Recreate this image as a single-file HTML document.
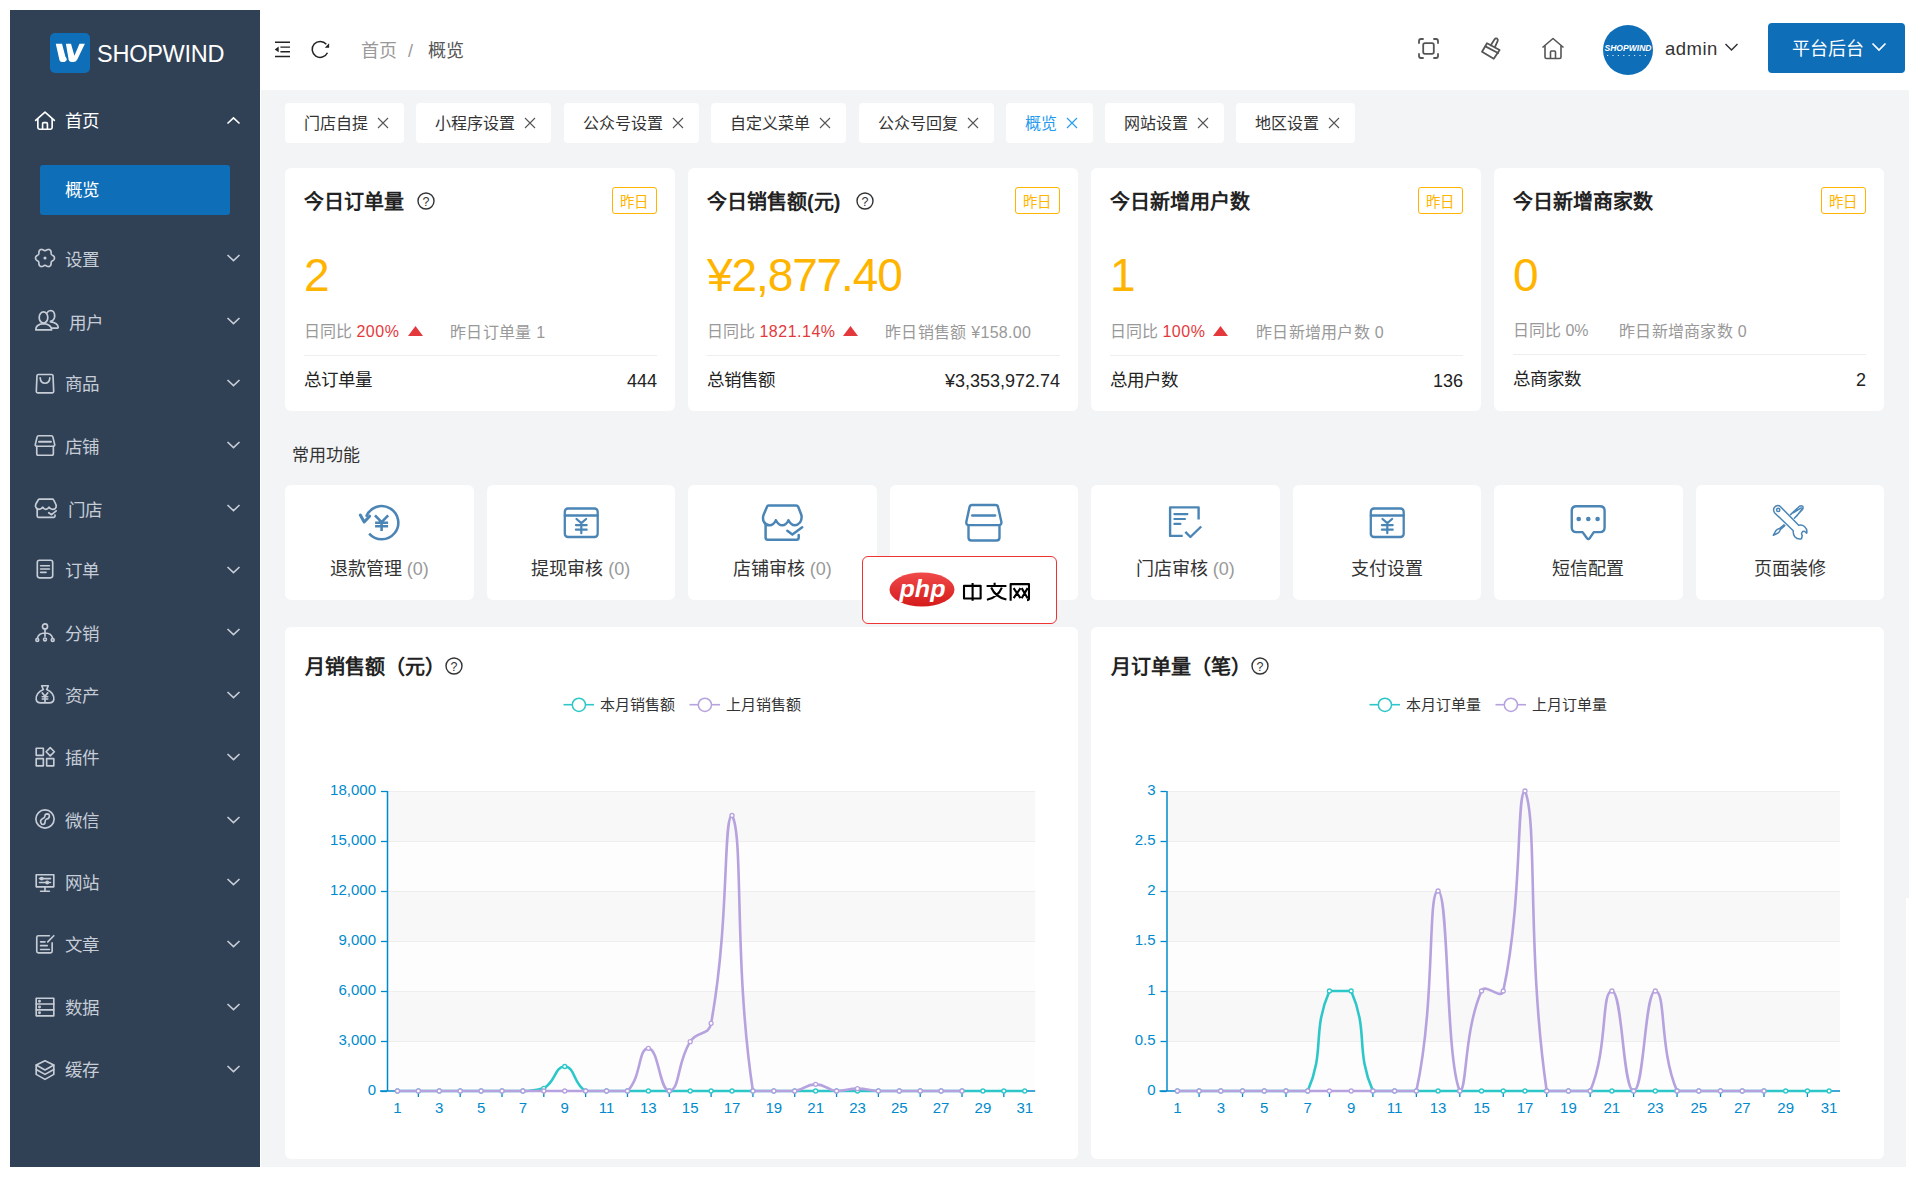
<!DOCTYPE html>
<html lang="zh-CN"><head><meta charset="utf-8"><title>ShopWind</title>
<style>
html,body{margin:0;padding:0;}
body{width:1920px;height:1180px;position:relative;overflow:hidden;background:#fff;font-family:"Liberation Sans", sans-serif;}
</style></head><body>
<div style="position:absolute;left:10px;top:10px;width:250px;height:1157px;background:#304156"></div><div style="position:absolute;left:50px;top:33px;width:40px;height:40px;border-radius:5px;background:#0e6eb8"></div><svg style="position:absolute;left:50px;top:33px" width="40" height="40" viewBox="0 0 40 40" ><path d="M5.76,10.85 L12.03,10.85 L15.3,23.2 L16.9,26.2 Q16.2,29 13,29 L12,29 Q10,29 9.5,27.3 Z" fill="#fff"/><path d="M15.9,10.85 L21,10.85 L24.4,22.7 L29.5,10.85 L34.9,10.85 L27.3,26.5 Q26,29 23.2,29 L21.6,29 Q19.3,29 18.7,27 Z" fill="#fff"/></svg><div style="position:absolute;left:97px;top:42.55px;height:23.5px;line-height:23.5px;font-size:23.5px;color:#fff;font-weight:normal;white-space:nowrap;letter-spacing:-0.25px">SHOPWIND</div><svg style="position:absolute;left:34px;top:109.5px" width="22" height="22" viewBox="0 0 20 20" ><g fill="none" stroke="#ffffff" stroke-width="1.5" stroke-linecap="round" stroke-linejoin="round"><path d="M1.5,9.5 L10,2 L18.5,9.5"/><path d="M3.5,8 V16 Q3.5,17.5 5,17.5 H15 Q16.5,17.5 16.5,16 V8"/><path d="M7.8,17.5 V12.5 Q7.8,11.5 8.8,11.5 H11.2 Q12.2,11.5 12.2,12.5 V17.5"/></g></svg><div style="position:absolute;left:65px;top:113.25px;height:17.5px;line-height:17.5px;font-size:17.5px;color:#ffffff;font-weight:normal;white-space:nowrap;">首页</div><svg style="position:absolute;left:226px;top:115.8px" width="15" height="10" viewBox="0 0 15 10" ><path d="M1.5,7.5 L7.5,1.8 L13.5,7.5" fill="none" stroke="#ffffff" stroke-width="1.6"/></svg><svg style="position:absolute;left:34px;top:246.6px" width="22" height="22" viewBox="0 0 20 20" ><g fill="none" stroke="#c7cdd6" stroke-width="1.5" stroke-linecap="round" stroke-linejoin="round"><path d="M18.60,10.00 L18.57,10.45 L18.45,10.89 L18.23,11.30 L17.92,11.68 L17.54,12.02 L17.12,12.31 L16.70,12.57 L16.33,12.82 L16.02,13.07 L15.80,13.35 L15.67,13.68 L15.60,14.07 L15.58,14.52 L15.56,15.01 L15.52,15.52 L15.42,16.02 L15.25,16.48 L15.00,16.88 L14.67,17.20 L14.30,17.45 L13.90,17.65 L13.46,17.76 L12.99,17.78 L12.50,17.70 L12.02,17.54 L11.56,17.32 L11.12,17.09 L10.72,16.89 L10.35,16.75 L10.00,16.70 L9.65,16.75 L9.28,16.89 L8.88,17.09 L8.44,17.32 L7.98,17.54 L7.50,17.70 L7.01,17.78 L6.54,17.76 L6.10,17.65 L5.70,17.45 L5.33,17.20 L5.00,16.88 L4.75,16.48 L4.58,16.02 L4.48,15.52 L4.44,15.01 L4.42,14.52 L4.40,14.07 L4.33,13.68 L4.20,13.35 L3.98,13.07 L3.67,12.82 L3.30,12.57 L2.88,12.31 L2.46,12.02 L2.08,11.68 L1.77,11.30 L1.55,10.89 L1.43,10.45 L1.40,10.00 L1.43,9.55 L1.55,9.11 L1.77,8.70 L2.08,8.32 L2.46,7.98 L2.88,7.69 L3.30,7.43 L3.67,7.18 L3.98,6.93 L4.20,6.65 L4.33,6.32 L4.40,5.93 L4.42,5.48 L4.44,4.99 L4.48,4.48 L4.58,3.98 L4.75,3.52 L5.00,3.12 L5.33,2.80 L5.70,2.55 L6.10,2.35 L6.54,2.24 L7.01,2.22 L7.50,2.30 L7.98,2.46 L8.44,2.68 L8.88,2.91 L9.28,3.11 L9.65,3.25 L10.00,3.30 L10.35,3.25 L10.72,3.11 L11.12,2.91 L11.56,2.68 L12.02,2.46 L12.50,2.30 L12.99,2.22 L13.46,2.24 L13.90,2.35 L14.30,2.55 L14.67,2.80 L15.00,3.12 L15.25,3.52 L15.42,3.98 L15.52,4.48 L15.56,4.99 L15.58,5.48 L15.60,5.93 L15.67,6.32 L15.80,6.65 L16.02,6.93 L16.33,7.18 L16.70,7.43 L17.12,7.69 L17.54,7.98 L17.92,8.32 L18.23,8.70 L18.45,9.11 L18.57,9.55Z"/><circle cx="10" cy="10" r="1.4" fill="#c7cdd6" stroke="none"/></g></svg><div style="position:absolute;left:65px;top:251.55px;height:17.5px;line-height:17.5px;font-size:17.5px;color:#c7cdd6;font-weight:normal;white-space:nowrap;">设置</div><svg style="position:absolute;left:226px;top:253.3px" width="15" height="10" viewBox="0 0 15 10" ><path d="M1.5,2 L7.5,7.7 L13.5,2" fill="none" stroke="#c7cdd6" stroke-width="1.6"/></svg><svg style="position:absolute;left:34px;top:307.7px" width="26" height="24" viewBox="0 0 26 24" ><g fill="none" stroke="#c7cdd6" stroke-width="1.7" stroke-linecap="round" stroke-linejoin="round"><ellipse cx="9.5" cy="9.4" rx="4.3" ry="5.6"/><path d="M1.8,21.9 Q1.5,16.3 9.5,15.6 Q17.5,16.3 17.6,21.9 Z"/><path d="M13,4.8 Q14.2,2.5 16.8,2.5 Q20.6,2.8 20.7,8 Q20.6,12.3 16.5,13.3 L16.5,13.9 Q23.6,14.8 24.2,19 Q24.3,20.2 22.8,20.2 H18"/></g></svg><div style="position:absolute;left:69px;top:314.55px;height:17.5px;line-height:17.5px;font-size:17.5px;color:#c7cdd6;font-weight:normal;white-space:nowrap;">用户</div><svg style="position:absolute;left:226px;top:315.6px" width="15" height="10" viewBox="0 0 15 10" ><path d="M1.5,2 L7.5,7.7 L13.5,2" fill="none" stroke="#c7cdd6" stroke-width="1.6"/></svg><svg style="position:absolute;left:34px;top:371.8px" width="22" height="22" viewBox="0 0 20 20" ><g fill="none" stroke="#c7cdd6" stroke-width="1.5" stroke-linecap="round" stroke-linejoin="round"><path d="M4,2.3 H16 Q17.2,2.3 17.3,3.5 L17.9,17.8 Q17.9,19 16.7,19 H3.3 Q2.1,19 2.1,17.8 L2.7,3.5 Q2.8,2.3 4,2.3 Z"/><path d="M5.6,5.4 Q6,10.2 10,10.2 Q14,10.2 14.4,5.4"/></g></svg><div style="position:absolute;left:65px;top:376.25px;height:17.5px;line-height:17.5px;font-size:17.5px;color:#c7cdd6;font-weight:normal;white-space:nowrap;">商品</div><svg style="position:absolute;left:226px;top:378.0px" width="15" height="10" viewBox="0 0 15 10" ><path d="M1.5,2 L7.5,7.7 L13.5,2" fill="none" stroke="#c7cdd6" stroke-width="1.6"/></svg><svg style="position:absolute;left:34px;top:434.0px" width="22" height="22" viewBox="0 0 20 20" ><g fill="none" stroke="#c7cdd6" stroke-width="1.5" stroke-linecap="round" stroke-linejoin="round"><path d="M4.2,1.6 H15.8 Q17,1.6 17.2,2.8 L18.8,9.5 Q19,11.1 17.6,11.1 H2.4 Q1,11.1 1.2,9.5 L2.8,2.8 Q3,1.6 4.2,1.6 Z"/><path d="M2.5,11.1 V18 Q2.5,19.4 3.9,19.4 H16.2 Q17.6,19.4 17.6,18 V11.1"/><path d="M4.6,7 H15.4" stroke-width="1.8"/></g></svg><div style="position:absolute;left:65px;top:438.55px;height:17.5px;line-height:17.5px;font-size:17.5px;color:#c7cdd6;font-weight:normal;white-space:nowrap;">店铺</div><svg style="position:absolute;left:226px;top:440.3px" width="15" height="10" viewBox="0 0 15 10" ><path d="M1.5,2 L7.5,7.7 L13.5,2" fill="none" stroke="#c7cdd6" stroke-width="1.6"/></svg><svg style="position:absolute;left:34px;top:497.2px" width="24" height="23" viewBox="0 0 24 23" ><g fill="none" stroke="#c7cdd6" stroke-width="1.7" stroke-linecap="round" stroke-linejoin="round"><path d="M5.5,2.1 H18.3 Q19.3,2.1 19.7,3 L21.9,7.5 Q22.8,10.5 21,11.7 Q20,12.4 18.7,12.3 Q16.3,12.3 15,10.2 Q13.8,12.3 11.8,12.3 Q9.8,12.3 8.7,10.2 Q7.4,12.3 5,12.3 Q2.3,12.2 1.6,9.5 Q1.3,8.2 2,6.8 L4.2,3 Q4.6,2.1 5.5,2.1 Z"/><path d="M3.2,12 V19 Q3.2,20.3 4.5,20.3 H19.8 Q21,20.3 21,19 V18"/><path d="M14.7,15.7 L17.6,17.7 L22.2,13.8"/></g></svg><div style="position:absolute;left:68px;top:502.15px;height:17.5px;line-height:17.5px;font-size:17.5px;color:#c7cdd6;font-weight:normal;white-space:nowrap;">门店</div><svg style="position:absolute;left:226px;top:502.7px" width="15" height="10" viewBox="0 0 15 10" ><path d="M1.5,2 L7.5,7.7 L13.5,2" fill="none" stroke="#c7cdd6" stroke-width="1.6"/></svg><svg style="position:absolute;left:34px;top:558.1px" width="22" height="22" viewBox="0 0 20 20" ><g fill="none" stroke="#c7cdd6" stroke-width="1.5" stroke-linecap="round" stroke-linejoin="round"><rect x="3" y="2" width="14" height="16" rx="2"/><path d="M6,7 H14 M6,10 H14 M6,13 H11"/></g></svg><div style="position:absolute;left:65px;top:563.35px;height:17.5px;line-height:17.5px;font-size:17.5px;color:#c7cdd6;font-weight:normal;white-space:nowrap;">订单</div><svg style="position:absolute;left:226px;top:565.1px" width="15" height="10" viewBox="0 0 15 10" ><path d="M1.5,2 L7.5,7.7 L13.5,2" fill="none" stroke="#c7cdd6" stroke-width="1.6"/></svg><svg style="position:absolute;left:34px;top:621.9px" width="22" height="22" viewBox="0 0 20 20" ><g fill="none" stroke="#c7cdd6" stroke-width="1.5" stroke-linecap="round" stroke-linejoin="round"><circle cx="10" cy="4" r="2.3"/><path d="M10,6.3 V13 M10,10 Q4,10 3,15 M10,10 Q16,10 17,15"/><circle cx="3" cy="16.3" r="1.3"/><circle cx="10" cy="15.8" r="1.3"/><circle cx="17" cy="16.3" r="1.3"/></g></svg><div style="position:absolute;left:65px;top:625.65px;height:17.5px;line-height:17.5px;font-size:17.5px;color:#c7cdd6;font-weight:normal;white-space:nowrap;">分销</div><svg style="position:absolute;left:226px;top:627.4px" width="15" height="10" viewBox="0 0 15 10" ><path d="M1.5,2 L7.5,7.7 L13.5,2" fill="none" stroke="#c7cdd6" stroke-width="1.6"/></svg><svg style="position:absolute;left:34px;top:683.2px" width="22" height="22" viewBox="0 0 20 20" ><g fill="none" stroke="#c7cdd6" stroke-width="1.5" stroke-linecap="round" stroke-linejoin="round"><path d="M7,2.5 H13 L11.5,6 Q18.5,9 18,15 Q17.5,18 14,18 H6 Q2.5,18 2,15 Q1.5,9 8.5,6 Z"/><path d="M7.5,9 L10,12 L12.5,9 M7.5,12.5 H12.5 M7.5,14.5 H12.5 M10,12 V17"/></g></svg><div style="position:absolute;left:65px;top:688.05px;height:17.5px;line-height:17.5px;font-size:17.5px;color:#c7cdd6;font-weight:normal;white-space:nowrap;">资产</div><svg style="position:absolute;left:226px;top:689.8px" width="15" height="10" viewBox="0 0 15 10" ><path d="M1.5,2 L7.5,7.7 L13.5,2" fill="none" stroke="#c7cdd6" stroke-width="1.6"/></svg><svg style="position:absolute;left:34px;top:746.1px" width="22" height="22" viewBox="0 0 20 20" ><g fill="none" stroke="#c7cdd6" stroke-width="1.5" stroke-linecap="round" stroke-linejoin="round"><rect x="2" y="2" width="6.5" height="6.5"/><rect x="2" y="11.5" width="6.5" height="6.5"/><rect x="11.5" y="11.5" width="6.5" height="6.5"/><path d="M14.75,1.5 L18.5,5.25 L14.75,9 L11,5.25 Z"/></g></svg><div style="position:absolute;left:65px;top:750.35px;height:17.5px;line-height:17.5px;font-size:17.5px;color:#c7cdd6;font-weight:normal;white-space:nowrap;">插件</div><svg style="position:absolute;left:226px;top:752.1px" width="15" height="10" viewBox="0 0 15 10" ><path d="M1.5,2 L7.5,7.7 L13.5,2" fill="none" stroke="#c7cdd6" stroke-width="1.6"/></svg><svg style="position:absolute;left:34px;top:808.2px" width="22" height="22" viewBox="0 0 20 20" ><g fill="none" stroke="#c7cdd6" stroke-width="1.5" stroke-linecap="round" stroke-linejoin="round"><circle cx="10" cy="10" r="8.3"/><path d="M6.5,14 Q5,11 8,9.5 Q10,8.8 10,7 Q10,5.5 12,5.3 Q14,5.3 14,7.2 Q14,9.5 11.5,10 Q10,10.5 10,13 Q10,15 8,15 Q7,15 6.5,14"/></g></svg><div style="position:absolute;left:65px;top:812.75px;height:17.5px;line-height:17.5px;font-size:17.5px;color:#c7cdd6;font-weight:normal;white-space:nowrap;">微信</div><svg style="position:absolute;left:226px;top:814.5px" width="15" height="10" viewBox="0 0 15 10" ><path d="M1.5,2 L7.5,7.7 L13.5,2" fill="none" stroke="#c7cdd6" stroke-width="1.6"/></svg><svg style="position:absolute;left:34px;top:871.9px" width="22" height="22" viewBox="0 0 20 20" ><g fill="none" stroke="#c7cdd6" stroke-width="1.5" stroke-linecap="round" stroke-linejoin="round"><path d="M2,2.5 H18 V13.5 H2 Z"/><path d="M10,13.5 V17 M6,17.5 H14"/><path d="M5,6 H15 M5,9.5 H15"/><circle cx="7" cy="6" r="1" /><circle cx="12" cy="9.5" r="1"/></g></svg><div style="position:absolute;left:65px;top:875.05px;height:17.5px;line-height:17.5px;font-size:17.5px;color:#c7cdd6;font-weight:normal;white-space:nowrap;">网站</div><svg style="position:absolute;left:226px;top:876.8px" width="15" height="10" viewBox="0 0 15 10" ><path d="M1.5,2 L7.5,7.7 L13.5,2" fill="none" stroke="#c7cdd6" stroke-width="1.6"/></svg><svg style="position:absolute;left:34px;top:932.5px" width="22" height="22" viewBox="0 0 20 20" ><g fill="none" stroke="#c7cdd6" stroke-width="1.5" stroke-linecap="round" stroke-linejoin="round"><path d="M14,2.5 H4 Q2.5,2.5 2.5,4 V16.5 Q2.5,18 4,18 H15 Q16.5,18 16.5,16.5 V9"/><path d="M6,8 H10 M6,11.5 H12 M6,15 H14"/><path d="M12.5,8 L18,2.5"/></g></svg><div style="position:absolute;left:65px;top:937.45px;height:17.5px;line-height:17.5px;font-size:17.5px;color:#c7cdd6;font-weight:normal;white-space:nowrap;">文章</div><svg style="position:absolute;left:226px;top:939.2px" width="15" height="10" viewBox="0 0 15 10" ><path d="M1.5,2 L7.5,7.7 L13.5,2" fill="none" stroke="#c7cdd6" stroke-width="1.6"/></svg><svg style="position:absolute;left:34px;top:996.0px" width="22" height="22" viewBox="0 0 20 20" ><g fill="none" stroke="#c7cdd6" stroke-width="1.5" stroke-linecap="round" stroke-linejoin="round"><rect x="2" y="2" width="16" height="16"/><path d="M2,7.3 H18 M2,12.6 H18"/><circle cx="5" cy="4.7" r=".6"/><circle cx="5" cy="10" r=".6"/><circle cx="5" cy="15.3" r=".6"/></g></svg><div style="position:absolute;left:65px;top:999.75px;height:17.5px;line-height:17.5px;font-size:17.5px;color:#c7cdd6;font-weight:normal;white-space:nowrap;">数据</div><svg style="position:absolute;left:226px;top:1001.5px" width="15" height="10" viewBox="0 0 15 10" ><path d="M1.5,2 L7.5,7.7 L13.5,2" fill="none" stroke="#c7cdd6" stroke-width="1.6"/></svg><svg style="position:absolute;left:34px;top:1058.9px" width="22" height="22" viewBox="0 0 20 20" ><g fill="none" stroke="#c7cdd6" stroke-width="1.5" stroke-linecap="round" stroke-linejoin="round"><path d="M10,1.5 L18,5.5 V14 L10,18.5 L2,14 V5.5 Z"/><path d="M2,5.5 L10,10 L18,5.5 M2,9.5 L10,14 L18,9.5"/></g></svg><div style="position:absolute;left:65px;top:1062.15px;height:17.5px;line-height:17.5px;font-size:17.5px;color:#c7cdd6;font-weight:normal;white-space:nowrap;">缓存</div><svg style="position:absolute;left:226px;top:1063.9px" width="15" height="10" viewBox="0 0 15 10" ><path d="M1.5,2 L7.5,7.7 L13.5,2" fill="none" stroke="#c7cdd6" stroke-width="1.6"/></svg><div style="position:absolute;left:40px;top:165px;width:190px;height:50px;border-radius:3px;background:#0e6eb8"></div><div style="position:absolute;left:65px;top:181.95px;height:17.5px;line-height:17.5px;font-size:17.5px;color:#fff;font-weight:normal;white-space:nowrap;">概览</div><svg style="position:absolute;left:274px;top:41px" width="18" height="18" viewBox="0 0 18 18" ><g stroke="#222" stroke-width="1.4" fill="none"><path d="M1,1.3 H16 M6.4,6.1 H16 M6.4,10.75 H16 M1,15.5 H16"/></g><path d="M0.7,8.45 L4.7,5.6 V11.3 Z" fill="#222"/></svg><svg style="position:absolute;left:310px;top:40px" width="22" height="20" viewBox="0 0 22 20" ><path d="M16.33,4.26 A8,8 0 1 0 17.45,12.78" fill="none" stroke="#222" stroke-width="1.5"/><path d="M19.1,3.3 V7.7 H14.8 Z" fill="#222"/></svg><div style="position:absolute;left:361px;top:42.20px;height:18px;line-height:18px;font-size:18px;color:#999;font-weight:normal;white-space:nowrap;">首页</div><div style="position:absolute;left:408px;top:42.20px;height:18px;line-height:18px;font-size:18px;color:#999;font-weight:normal;white-space:nowrap;">/</div><div style="position:absolute;left:428px;top:42.20px;height:18px;line-height:18px;font-size:18px;color:#555;font-weight:normal;white-space:nowrap;">概览</div><svg style="position:absolute;left:1417px;top:37px" width="23" height="23" viewBox="0 0 23 23" ><g fill="none" stroke="#555" stroke-width="1.8" stroke-linecap="round"><path d="M2,6 V4 Q2,2 4,2 H6 M17,2 H19 Q21,2 21,4 V6 M21,17 V19 Q21,21 19,21 H17 M6,21 H4 Q2,21 2,19 V17"/><rect x="6.2" y="6.2" width="10.6" height="10.6" rx="1.8"/></g></svg><svg style="position:absolute;left:1478px;top:35px" width="26" height="26" viewBox="0 0 26 26" ><g fill="none" stroke="#555" stroke-width="1.8" stroke-linejoin="round" stroke-linecap="round"><path d="M9,8.3 L21.6,15 L15.75,23.75 L4,16.8 Z"/><path d="M7.4,11.4 L20,18"/><path d="M12.8,10.2 L16.6,4.2 Q17.6,2.8 19.1,3.6 Q20.3,4.5 19.7,5.9 L16.8,12.3"/></g></svg><svg style="position:absolute;left:1541px;top:37px" width="24" height="23" viewBox="0 0 24 23" ><g fill="none" stroke="#555" stroke-width="1.6" stroke-linejoin="round"><path d="M1.5,10.5 L12,1.5 L22.5,10.5"/><path d="M4,8.5 V20 Q4,21.5 5.5,21.5 H18.5 Q20,21.5 20,20 V8.5"/><path d="M9.5,21.5 V15 Q9.5,14 10.5,14 H13.5 Q14.5,14 14.5,15 V21.5"/></g></svg><svg style="position:absolute;left:1603px;top:25px" width="50" height="50" viewBox="0 0 50 50" ><circle cx="25" cy="25" r="25" fill="#0e6eb8"/><text x="25" y="26" text-anchor="middle" font-family="Liberation Sans" font-weight="bold" font-style="italic" font-size="9.5" textLength="47" lengthAdjust="spacingAndGlyphs" fill="#fff">SHOPWIND</text><path d="M4,30.5 H46" stroke="#fff" stroke-width="1" stroke-dasharray="1.2,4.2" opacity="0.85"/></svg><div style="position:absolute;left:1665px;top:40.25px;height:18.5px;line-height:18.5px;font-size:18.5px;color:#333;font-weight:normal;white-space:nowrap;letter-spacing:0.5px">admin</div><svg style="position:absolute;left:1724px;top:42px" width="15" height="11" viewBox="0 0 15 11" ><path d="M1.5,2 L7.5,8 L13.5,2" fill="none" stroke="#333" stroke-width="1.5"/></svg><div style="position:absolute;left:1768px;top:23px;width:137px;height:50px;border-radius:4px;background:#0e6eb8"></div><div style="position:absolute;left:1792px;top:40.00px;height:18px;line-height:18px;font-size:18px;color:#fff;font-weight:normal;white-space:nowrap;">平台后台</div><svg style="position:absolute;left:1871px;top:41px" width="16" height="12" viewBox="0 0 16 12" ><path d="M1.5,2.5 L8,9 L14.5,2.5" fill="none" stroke="#fff" stroke-width="1.7"/></svg><div style="position:absolute;left:261px;top:90px;width:1648px;height:808px;background:#f3f4f6"></div><div style="position:absolute;left:261px;top:898px;width:1645px;height:269px;background:#f3f4f6"></div><div style="position:absolute;left:285px;top:103px;width:119px;height:40px;border-radius:4px;background:#fff"></div><div style="position:absolute;left:304px;top:116.00px;height:16px;line-height:16px;font-size:16px;color:#333;font-weight:normal;white-space:nowrap;">门店自提</div><svg style="position:absolute;left:377px;top:117px" width="12" height="12" viewBox="0 0 12 12" ><path d="M1,1 L11,11 M11,1 L1,11" stroke="#555" stroke-width="1.1"/></svg><div style="position:absolute;left:416px;top:103px;width:135px;height:40px;border-radius:4px;background:#fff"></div><div style="position:absolute;left:435px;top:116.00px;height:16px;line-height:16px;font-size:16px;color:#333;font-weight:normal;white-space:nowrap;">小程序设置</div><svg style="position:absolute;left:524px;top:117px" width="12" height="12" viewBox="0 0 12 12" ><path d="M1,1 L11,11 M11,1 L1,11" stroke="#555" stroke-width="1.1"/></svg><div style="position:absolute;left:564px;top:103px;width:135px;height:40px;border-radius:4px;background:#fff"></div><div style="position:absolute;left:583px;top:116.00px;height:16px;line-height:16px;font-size:16px;color:#333;font-weight:normal;white-space:nowrap;">公众号设置</div><svg style="position:absolute;left:672px;top:117px" width="12" height="12" viewBox="0 0 12 12" ><path d="M1,1 L11,11 M11,1 L1,11" stroke="#555" stroke-width="1.1"/></svg><div style="position:absolute;left:711px;top:103px;width:135px;height:40px;border-radius:4px;background:#fff"></div><div style="position:absolute;left:730px;top:116.00px;height:16px;line-height:16px;font-size:16px;color:#333;font-weight:normal;white-space:nowrap;">自定义菜单</div><svg style="position:absolute;left:819px;top:117px" width="12" height="12" viewBox="0 0 12 12" ><path d="M1,1 L11,11 M11,1 L1,11" stroke="#555" stroke-width="1.1"/></svg><div style="position:absolute;left:859px;top:103px;width:135px;height:40px;border-radius:4px;background:#fff"></div><div style="position:absolute;left:878px;top:116.00px;height:16px;line-height:16px;font-size:16px;color:#333;font-weight:normal;white-space:nowrap;">公众号回复</div><svg style="position:absolute;left:967px;top:117px" width="12" height="12" viewBox="0 0 12 12" ><path d="M1,1 L11,11 M11,1 L1,11" stroke="#555" stroke-width="1.1"/></svg><div style="position:absolute;left:1006px;top:103px;width:87px;height:40px;border-radius:4px;background:#fff"></div><div style="position:absolute;left:1025px;top:116.00px;height:16px;line-height:16px;font-size:16px;color:#1f9bf0;font-weight:normal;white-space:nowrap;">概览</div><svg style="position:absolute;left:1066px;top:117px" width="12" height="12" viewBox="0 0 12 12" ><path d="M1,1 L11,11 M11,1 L1,11" stroke="#1f9bf0" stroke-width="1.1"/></svg><div style="position:absolute;left:1105px;top:103px;width:119px;height:40px;border-radius:4px;background:#fff"></div><div style="position:absolute;left:1124px;top:116.00px;height:16px;line-height:16px;font-size:16px;color:#333;font-weight:normal;white-space:nowrap;">网站设置</div><svg style="position:absolute;left:1197px;top:117px" width="12" height="12" viewBox="0 0 12 12" ><path d="M1,1 L11,11 M11,1 L1,11" stroke="#555" stroke-width="1.1"/></svg><div style="position:absolute;left:1236px;top:103px;width:119px;height:40px;border-radius:4px;background:#fff"></div><div style="position:absolute;left:1255px;top:116.00px;height:16px;line-height:16px;font-size:16px;color:#333;font-weight:normal;white-space:nowrap;">地区设置</div><svg style="position:absolute;left:1328px;top:117px" width="12" height="12" viewBox="0 0 12 12" ><path d="M1,1 L11,11 M11,1 L1,11" stroke="#555" stroke-width="1.1"/></svg><div style="position:absolute;left:285px;top:168px;width:390px;height:243px;border-radius:6px;background:#fff"></div><div style="position:absolute;left:304px;top:192.20px;height:20px;line-height:20px;font-size:20px;color:#222;font-weight:bold;white-space:nowrap;">今日订单量</div><svg style="position:absolute;left:417px;top:192px" width="18" height="18" viewBox="0 0 18 18" ><circle cx="9.0" cy="9.0" r="8.0" fill="none" stroke="#333" stroke-width="1.4"/><text x="9.0" y="13.6" text-anchor="middle" font-family="Liberation Sans" font-size="12.5" fill="#333">?</text></svg><div style="position:absolute;left:612px;top:187px;width:43px;height:25px;border:1px solid #ffb400;border-radius:3px"></div><div style="position:absolute;left:634px;transform:translateX(-50%);top:195.05px;height:14.5px;line-height:14.5px;font-size:14.5px;color:#ffb400;font-weight:normal;white-space:nowrap;">昨日</div><div style="position:absolute;left:304px;top:252.00px;height:46px;line-height:46px;font-size:46px;color:#ffb400;font-weight:normal;white-space:nowrap;letter-spacing:-1.1px">2</div><div style="position:absolute;left:304px;top:322px;height:20px;line-height:20px;font-size:16px;color:#999;white-space:nowrap">日同比 <span style="color:#e4393c;letter-spacing:0.5px">200%</span></div><div style="position:absolute;left:304px;top:355px;width:353px;height:1px;background:#eee"></div><div style="position:absolute;left:304px;top:371.75px;height:17.5px;line-height:17.5px;font-size:17.5px;color:#222;font-weight:normal;white-space:nowrap;">总订单量</div><div style="position:absolute;right:1263px;top:371.50px;height:18px;line-height:18px;font-size:18px;color:#222;font-weight:normal;white-space:nowrap;">444</div><div style="position:absolute;left:688px;top:168px;width:390px;height:243px;border-radius:6px;background:#fff"></div><div style="position:absolute;left:707px;top:192.20px;height:20px;line-height:20px;font-size:20px;color:#222;font-weight:bold;white-space:nowrap;">今日销售额(元)</div><svg style="position:absolute;left:856px;top:192px" width="18" height="18" viewBox="0 0 18 18" ><circle cx="9.0" cy="9.0" r="8.0" fill="none" stroke="#333" stroke-width="1.4"/><text x="9.0" y="13.6" text-anchor="middle" font-family="Liberation Sans" font-size="12.5" fill="#333">?</text></svg><div style="position:absolute;left:1015px;top:187px;width:43px;height:25px;border:1px solid #ffb400;border-radius:3px"></div><div style="position:absolute;left:1037px;transform:translateX(-50%);top:195.05px;height:14.5px;line-height:14.5px;font-size:14.5px;color:#ffb400;font-weight:normal;white-space:nowrap;">昨日</div><div style="position:absolute;left:707px;top:252.00px;height:46px;line-height:46px;font-size:46px;color:#ffb400;font-weight:normal;white-space:nowrap;letter-spacing:-1.1px">¥2,877.40</div><div style="position:absolute;left:707px;top:322px;height:20px;line-height:20px;font-size:16px;color:#999;white-space:nowrap">日同比 <span style="color:#e4393c;letter-spacing:0.5px">1821.14%</span></div><div style="position:absolute;left:707px;top:355px;width:353px;height:1px;background:#eee"></div><div style="position:absolute;left:707px;top:371.75px;height:17.5px;line-height:17.5px;font-size:17.5px;color:#222;font-weight:normal;white-space:nowrap;">总销售额</div><div style="position:absolute;right:860px;top:371.50px;height:18px;line-height:18px;font-size:18px;color:#222;font-weight:normal;white-space:nowrap;">¥3,353,972.74</div><div style="position:absolute;left:1091px;top:168px;width:390px;height:243px;border-radius:6px;background:#fff"></div><div style="position:absolute;left:1110px;top:192.20px;height:20px;line-height:20px;font-size:20px;color:#222;font-weight:bold;white-space:nowrap;">今日新增用户数</div><div style="position:absolute;left:1418px;top:187px;width:43px;height:25px;border:1px solid #ffb400;border-radius:3px"></div><div style="position:absolute;left:1440px;transform:translateX(-50%);top:195.05px;height:14.5px;line-height:14.5px;font-size:14.5px;color:#ffb400;font-weight:normal;white-space:nowrap;">昨日</div><div style="position:absolute;left:1110px;top:252.00px;height:46px;line-height:46px;font-size:46px;color:#ffb400;font-weight:normal;white-space:nowrap;letter-spacing:-1.1px">1</div><div style="position:absolute;left:1110px;top:322px;height:20px;line-height:20px;font-size:16px;color:#999;white-space:nowrap">日同比 <span style="color:#e4393c;letter-spacing:0.5px">100%</span></div><div style="position:absolute;left:1110px;top:355px;width:353px;height:1px;background:#eee"></div><div style="position:absolute;left:1110px;top:371.75px;height:17.5px;line-height:17.5px;font-size:17.5px;color:#222;font-weight:normal;white-space:nowrap;">总用户数</div><div style="position:absolute;right:457px;top:371.50px;height:18px;line-height:18px;font-size:18px;color:#222;font-weight:normal;white-space:nowrap;">136</div><div style="position:absolute;left:1494px;top:168px;width:390px;height:243px;border-radius:6px;background:#fff"></div><div style="position:absolute;left:1513px;top:192.20px;height:20px;line-height:20px;font-size:20px;color:#222;font-weight:bold;white-space:nowrap;">今日新增商家数</div><div style="position:absolute;left:1821px;top:187px;width:43px;height:25px;border:1px solid #ffb400;border-radius:3px"></div><div style="position:absolute;left:1843px;transform:translateX(-50%);top:195.05px;height:14.5px;line-height:14.5px;font-size:14.5px;color:#ffb400;font-weight:normal;white-space:nowrap;">昨日</div><div style="position:absolute;left:1513px;top:252.00px;height:46px;line-height:46px;font-size:46px;color:#ffb400;font-weight:normal;white-space:nowrap;letter-spacing:-1.1px">0</div><div style="position:absolute;left:1513px;top:321px;height:20px;line-height:20px;font-size:16px;color:#999;white-space:nowrap">日同比 0%</div><div style="position:absolute;left:1513px;top:354px;width:353px;height:1px;background:#eee"></div><div style="position:absolute;left:1513px;top:370.75px;height:17.5px;line-height:17.5px;font-size:17.5px;color:#222;font-weight:normal;white-space:nowrap;">总商家数</div><div style="position:absolute;right:54px;top:370.50px;height:18px;line-height:18px;font-size:18px;color:#222;font-weight:normal;white-space:nowrap;">2</div><svg style="position:absolute;left:408px;top:326px" width="15" height="10" viewBox="0 0 15 10" ><path d="M7.5,0 L15,10 H0 Z" fill="#e4393c"/></svg><svg style="position:absolute;left:843px;top:326px" width="15" height="10" viewBox="0 0 15 10" ><path d="M7.5,0 L15,10 H0 Z" fill="#e4393c"/></svg><svg style="position:absolute;left:1213px;top:326px" width="15" height="10" viewBox="0 0 15 10" ><path d="M7.5,0 L15,10 H0 Z" fill="#e4393c"/></svg><div style="position:absolute;left:450px;top:324.50px;height:16px;line-height:16px;font-size:16px;color:#999;font-weight:normal;white-space:nowrap;letter-spacing:0.3px">昨日订单量 1</div><div style="position:absolute;left:885px;top:324.50px;height:16px;line-height:16px;font-size:16px;color:#999;font-weight:normal;white-space:nowrap;letter-spacing:0.3px">昨日销售额 ¥158.00</div><div style="position:absolute;left:1256px;top:324.50px;height:16px;line-height:16px;font-size:16px;color:#999;font-weight:normal;white-space:nowrap;letter-spacing:0.3px">昨日新增用户数 0</div><div style="position:absolute;left:1619px;top:323.50px;height:16px;line-height:16px;font-size:16px;color:#999;font-weight:normal;white-space:nowrap;letter-spacing:0.3px">昨日新增商家数 0</div><div style="position:absolute;left:292px;top:447.00px;height:17px;line-height:17px;font-size:17px;color:#333;font-weight:normal;white-space:nowrap;">常用功能</div><div style="position:absolute;left:285.0px;top:485px;width:188.5px;height:115px;border-radius:6px;background:#fff"></div><svg style="position:absolute;left:350px;top:495px" width="60" height="55" viewBox="0 0 60 55" ><g fill="none" stroke="#4a85b6" stroke-width="2.6" stroke-linecap="butt" stroke-linejoin="round"><path d="M16.2,21.75 A16.6,16.6 0 1 1 19.17,38.59"/></g><g fill="none" stroke="#4a85b6" stroke-width="3.0" stroke-linecap="round" stroke-linejoin="round"><path d="M10.3,20 L14.2,27 L19.6,21.2"/></g><g fill="none" stroke="#4a85b6" stroke-width="2.6" stroke-linecap="butt" stroke-linejoin="round"><path d="M25.0,20.3 L31.6,27.2 L38.2,20.3 M25.1,27.7 H38.1 M25.1,31.3 H38.1 M31.6,27.2 V36"/></g></svg><div style="position:absolute;left:285.0px;top:559px;width:188.5px;height:20px;line-height:20px;text-align:center;font-size:18px;color:#333;white-space:nowrap">退款管理<span style="color:#999"> (0)</span></div><div style="position:absolute;left:486.5px;top:485px;width:188.5px;height:115px;border-radius:6px;background:#fff"></div><svg style="position:absolute;left:555px;top:495px" width="60" height="55" viewBox="0 0 60 55" ><g fill="none" stroke="#4a85b6" stroke-width="2.3" stroke-linecap="round" stroke-linejoin="round"><rect x="9.8" y="13.5" width="32.9" height="28.5" rx="3.2"/><path d="M9.8,20.5 H42.7"/></g><g fill="none" stroke="#4a85b6" stroke-width="2.2" stroke-linecap="round" stroke-linejoin="round"><path d="M21.5,24 L26.3,28.2 L31.1,24 M20.9,30.1 H31.700000000000003 M20.9,34.7 H31.700000000000003 M26.3,28.2 V38.2"/></g></svg><div style="position:absolute;left:486.5px;top:559px;width:188.5px;height:20px;line-height:20px;text-align:center;font-size:18px;color:#333;white-space:nowrap">提现审核<span style="color:#999"> (0)</span></div><div style="position:absolute;left:688.0px;top:485px;width:188.5px;height:115px;border-radius:6px;background:#fff"></div><svg style="position:absolute;left:750px;top:495px" width="60" height="55" viewBox="0 0 60 55" ><g fill="none" stroke="#4a85b6" stroke-width="2.5" stroke-linecap="round" stroke-linejoin="round"><path d="M18.6,10.5 H46 Q47.6,10.5 48.3,12 L51.2,19.5 Q52.5,23.5 50,27.5 Q47.5,30.3 45,30.3 Q41,30.3 38.5,25.2 Q36,30.3 32.4,30.3 Q28.5,30.3 25.9,25.2 Q23.5,30.3 19.6,30.3 Q16,30.3 14,27 Q12.3,24 13.5,20 L16.9,12 Q17.4,10.5 18.6,10.5 Z"/><path d="M15.6,29 V42.5 Q15.6,44.75 17.8,44.75 H46.5 Q48.7,44.75 48.7,42.5 V39.9"/><path d="M37.3,35.7 L42.4,39.6 L52.2,32.2"/></g></svg><div style="position:absolute;left:688.0px;top:559px;width:188.5px;height:20px;line-height:20px;text-align:center;font-size:18px;color:#333;white-space:nowrap">店铺审核<span style="color:#999"> (0)</span></div><div style="position:absolute;left:889.5px;top:485px;width:188.5px;height:115px;border-radius:6px;background:#fff"></div><svg style="position:absolute;left:955px;top:495px" width="60" height="55" viewBox="0 0 60 55" ><g fill="none" stroke="#4a85b6" stroke-width="2.4" stroke-linecap="round" stroke-linejoin="round"><path d="M17,10 H40.5 Q42.7,10 43.1,12.2 L46.4,27 Q46.6,30.1 44,30.1 H13.6 Q11,30.1 11.3,27 L14.5,12.2 Q15,10 17,10 Z"/><path d="M13.5,30.1 V42.5 Q13.5,45.5 16.5,45.5 H41.5 Q44.5,45.5 44.5,42.5 V30.1"/><path d="M17.2,20.5 H40.1"/></g></svg><div style="position:absolute;left:1091.0px;top:485px;width:188.5px;height:115px;border-radius:6px;background:#fff"></div><svg style="position:absolute;left:1155px;top:495px" width="60" height="55" viewBox="0 0 60 55" ><g fill="none" stroke="#4a85b6" stroke-width="2.4" stroke-linecap="butt" stroke-linejoin="round"><path d="M27.7,40.9 H15.1 V12.4 H43.6 V24.6"/></g><g fill="none" stroke="#4a85b6" stroke-width="2.2" stroke-linecap="round" stroke-linejoin="round"><path d="M19.4,19.1 H32.4 M19.4,24 H30 M19.4,28.9 H25.4"/></g><g fill="none" stroke="#4a85b6" stroke-width="2.4" stroke-linecap="butt" stroke-linejoin="round"><path d="M30.3,36.8 L35.4,42 L46.2,31.5"/></g></svg><div style="position:absolute;left:1091.0px;top:559px;width:188.5px;height:20px;line-height:20px;text-align:center;font-size:18px;color:#333;white-space:nowrap">门店审核<span style="color:#999"> (0)</span></div><div style="position:absolute;left:1292.5px;top:485px;width:188.5px;height:115px;border-radius:6px;background:#fff"></div><svg style="position:absolute;left:1361px;top:495px" width="60" height="55" viewBox="0 0 60 55" ><g fill="none" stroke="#4a85b6" stroke-width="2.3" stroke-linecap="round" stroke-linejoin="round"><rect x="9.8" y="13.5" width="32.9" height="28.5" rx="3.2"/><path d="M9.8,20.5 H42.7"/></g><g fill="none" stroke="#4a85b6" stroke-width="2.2" stroke-linecap="round" stroke-linejoin="round"><path d="M21.5,24 L26.3,28.2 L31.1,24 M20.9,30.1 H31.700000000000003 M20.9,34.7 H31.700000000000003 M26.3,28.2 V38.2"/></g></svg><div style="position:absolute;left:1292.5px;top:559px;width:188.5px;height:20px;line-height:20px;text-align:center;font-size:18px;color:#333;white-space:nowrap">支付设置<span style="color:#999"></span></div><div style="position:absolute;left:1494.0px;top:485px;width:188.5px;height:115px;border-radius:6px;background:#fff"></div><svg style="position:absolute;left:1558px;top:495px" width="60" height="55" viewBox="0 0 60 55" ><g fill="none" stroke="#4a85b6" stroke-width="2.4" stroke-linecap="round" stroke-linejoin="round"><path d="M18.3,11.2 H42 Q46.6,11.2 46.6,15.8 V32.5 Q46.6,37.1 42,37.1 H35.8 L31.6,43.3 Q30.3,45 29,43.3 L24.6,37.1 H18.3 Q13.75,37.1 13.75,32.5 V15.8 Q13.75,11.2 18.3,11.2 Z"/></g><circle cx="20.7" cy="24" r="2.3" fill="#4a85b6"/><circle cx="30.3" cy="24" r="2.3" fill="#4a85b6"/><circle cx="39.6" cy="24" r="2.3" fill="#4a85b6"/></svg><div style="position:absolute;left:1494.0px;top:559px;width:188.5px;height:20px;line-height:20px;text-align:center;font-size:18px;color:#333;white-space:nowrap">短信配置<span style="color:#999"></span></div><div style="position:absolute;left:1695.5px;top:485px;width:188.5px;height:115px;border-radius:6px;background:#fff"></div><svg style="position:absolute;left:1760px;top:495px" width="60" height="55" viewBox="0 0 60 55" ><g fill="none" stroke="#4a85b6" stroke-width="1.5" stroke-linecap="round" stroke-linejoin="round"><path d="M20.5,11.7 L38.7,30.3 Q42,29.3 44.5,31.5 Q47.6,34.3 46.7,38.2 L44.8,36.5 Q43,35.8 42,37.3 Q41,39 42.3,40.5 L41.5,43.8 Q37.5,44.7 34.8,41.7 Q32.8,39 33.3,35.7 L14.5,17.7 Q12.8,15 14.2,12.6 Q16.2,10 19,10.7 Z"/><circle cx="18.2" cy="14.9" r="1.6"/><path d="M30.5,19.6 L39.5,11.2 Q41.6,10.2 42.8,11.6 Q43.6,13.3 42.2,14.8 L34.4,23.2 M33.2,17.8 L41.2,12.8 M36.5,21.2 L42.2,14"/><path d="M24,29.8 L19.5,33.6 Q17,34 15.6,36 L13.3,40.3 L17.5,38.3 Q19.8,37 20.2,34.8 L24.8,30.7"/></g></svg><div style="position:absolute;left:1695.5px;top:559px;width:188.5px;height:20px;line-height:20px;text-align:center;font-size:18px;color:#333;white-space:nowrap">页面装修<span style="color:#999"></span></div><div style="position:absolute;left:862px;top:556px;width:192.5px;height:65.5px;border:1px solid #e33;border-radius:6px;background:#fff"></div><svg style="position:absolute;left:889px;top:572px" width="66" height="35" viewBox="0 0 66 35" ><defs><linearGradient id="pg" x1="0" y1="0" x2="0" y2="1"><stop offset="0" stop-color="#f04a4a"/><stop offset="1" stop-color="#d51b1b"/></linearGradient></defs><ellipse cx="33" cy="17.5" rx="32.5" ry="17" fill="url(#pg)"/><text x="33.5" y="25" text-anchor="middle" font-family="Liberation Sans" font-weight="bold" font-style="italic" font-size="23" textLength="46" lengthAdjust="spacingAndGlyphs" fill="#fff">php</text></svg><svg style="position:absolute;left:850px;top:540px" width="220" height="100" viewBox="0 0 220 100" ><path d="M114.01,45.83 H130.63 V58.44 H114.01 Z M122.61,42.97 V60.73 M144.61,42.63 V45.61 M136.59,46.06 H156.41 M141.17,47.55 Q145.53,57.29 156.41,59.59 M151.83,47.55 Q147.82,57.29 136.93,59.81 M160.65,60.73 V44.12 H178.98 V58.44 Q178.98,60.16 177.04,60.16 M163.63,48.13 L170.51,58.21 M170.51,48.13 L163.63,58.21 M171.65,48.13 L177.61,58.21 M177.61,48.13 L171.65,58.21" fill="none" stroke="#000" stroke-width="2.1" stroke-linejoin="round"/></svg><div style="position:absolute;left:285px;top:627px;width:793px;height:532px;border-radius:6px;background:#fff"></div><div style="position:absolute;left:305px;top:657.00px;height:20px;line-height:20px;font-size:20px;color:#222;font-weight:bold;white-space:nowrap;">月销售额（元）</div><svg style="position:absolute;left:445px;top:657px" width="18" height="18" viewBox="0 0 18 18" ><circle cx="9.0" cy="9.0" r="8.0" fill="none" stroke="#333" stroke-width="1.4"/><text x="9.0" y="13.6" text-anchor="middle" font-family="Liberation Sans" font-size="12.5" fill="#333">?</text></svg><svg style="position:absolute;left:563px;top:696px" width="31" height="17" viewBox="0 0 31 17" ><path d="M0.5,8.7 H31" stroke="#2ec7c9" stroke-width="1.6"/><circle cx="15.9" cy="8.8" r="6.6" fill="#fff" stroke="#2ec7c9" stroke-width="1.5"/></svg><div style="position:absolute;left:600px;top:697.00px;height:15px;line-height:15px;font-size:15px;color:#333;font-weight:normal;white-space:nowrap;">本月销售额</div><svg style="position:absolute;left:689px;top:696px" width="31" height="17" viewBox="0 0 31 17" ><path d="M0.5,8.7 H31" stroke="#b6a2de" stroke-width="1.6"/><circle cx="15.9" cy="8.8" r="6.6" fill="#fff" stroke="#b6a2de" stroke-width="1.5"/></svg><div style="position:absolute;left:726px;top:697.00px;height:15px;line-height:15px;font-size:15px;color:#333;font-weight:normal;white-space:nowrap;">上月销售额</div><svg style="position:absolute;left:0;top:0" width="1920" height="1180"><rect x="387" y="791" width="648.2" height="50" fill="#f8f8f8"/><rect x="387" y="841" width="648.2" height="50" fill="#fdfdfd"/><rect x="387" y="891" width="648.2" height="50" fill="#f8f8f8"/><rect x="387" y="941" width="648.2" height="50" fill="#fdfdfd"/><rect x="387" y="991" width="648.2" height="50" fill="#f8f8f8"/><rect x="387" y="1041" width="648.2" height="50" fill="#fdfdfd"/><path d="M387,791.5 H1035.2" stroke="#eeeeee" stroke-width="1"/><path d="M387,841.5 H1035.2" stroke="#eeeeee" stroke-width="1"/><path d="M387,891.5 H1035.2" stroke="#eeeeee" stroke-width="1"/><path d="M387,941.5 H1035.2" stroke="#eeeeee" stroke-width="1"/><path d="M387,991.5 H1035.2" stroke="#eeeeee" stroke-width="1"/><path d="M387,1041.5 H1035.2" stroke="#eeeeee" stroke-width="1"/><path d="M387.5,791 V1091" stroke="#008acd" stroke-width="1.5"/><path d="M380,1091 H1035.2" stroke="#008acd" stroke-width="1.5"/><path d="M381,791.5 H387" stroke="#008acd" stroke-width="1.3"/><text x="376" y="795.2" text-anchor="end" font-family="Liberation Sans" font-size="15" fill="#008acd">18,000</text><path d="M381,841.5 H387" stroke="#008acd" stroke-width="1.3"/><text x="376" y="845.2" text-anchor="end" font-family="Liberation Sans" font-size="15" fill="#008acd">15,000</text><path d="M381,891.5 H387" stroke="#008acd" stroke-width="1.3"/><text x="376" y="895.2" text-anchor="end" font-family="Liberation Sans" font-size="15" fill="#008acd">12,000</text><path d="M381,941.5 H387" stroke="#008acd" stroke-width="1.3"/><text x="376" y="945.2" text-anchor="end" font-family="Liberation Sans" font-size="15" fill="#008acd">9,000</text><path d="M381,991.5 H387" stroke="#008acd" stroke-width="1.3"/><text x="376" y="995.2" text-anchor="end" font-family="Liberation Sans" font-size="15" fill="#008acd">6,000</text><path d="M381,1041.5 H387" stroke="#008acd" stroke-width="1.3"/><text x="376" y="1045.2" text-anchor="end" font-family="Liberation Sans" font-size="15" fill="#008acd">3,000</text><path d="M381,1091.5 H387" stroke="#008acd" stroke-width="1.3"/><text x="376" y="1095.2" text-anchor="end" font-family="Liberation Sans" font-size="15" fill="#008acd">0</text><text x="397.45" y="1113" text-anchor="middle" font-family="Liberation Sans" font-size="15" fill="#008acd">1</text><path d="M418.36,1091 V1097" stroke="#008acd" stroke-width="1.3"/><text x="439.27" y="1113" text-anchor="middle" font-family="Liberation Sans" font-size="15" fill="#008acd">3</text><path d="M460.18,1091 V1097" stroke="#008acd" stroke-width="1.3"/><text x="481.09" y="1113" text-anchor="middle" font-family="Liberation Sans" font-size="15" fill="#008acd">5</text><path d="M502.00,1091 V1097" stroke="#008acd" stroke-width="1.3"/><text x="522.91" y="1113" text-anchor="middle" font-family="Liberation Sans" font-size="15" fill="#008acd">7</text><path d="M543.82,1091 V1097" stroke="#008acd" stroke-width="1.3"/><text x="564.73" y="1113" text-anchor="middle" font-family="Liberation Sans" font-size="15" fill="#008acd">9</text><path d="M585.64,1091 V1097" stroke="#008acd" stroke-width="1.3"/><text x="606.55" y="1113" text-anchor="middle" font-family="Liberation Sans" font-size="15" fill="#008acd">11</text><path d="M627.46,1091 V1097" stroke="#008acd" stroke-width="1.3"/><text x="648.37" y="1113" text-anchor="middle" font-family="Liberation Sans" font-size="15" fill="#008acd">13</text><path d="M669.28,1091 V1097" stroke="#008acd" stroke-width="1.3"/><text x="690.19" y="1113" text-anchor="middle" font-family="Liberation Sans" font-size="15" fill="#008acd">15</text><path d="M711.10,1091 V1097" stroke="#008acd" stroke-width="1.3"/><text x="732.01" y="1113" text-anchor="middle" font-family="Liberation Sans" font-size="15" fill="#008acd">17</text><path d="M752.92,1091 V1097" stroke="#008acd" stroke-width="1.3"/><text x="773.83" y="1113" text-anchor="middle" font-family="Liberation Sans" font-size="15" fill="#008acd">19</text><path d="M794.74,1091 V1097" stroke="#008acd" stroke-width="1.3"/><text x="815.65" y="1113" text-anchor="middle" font-family="Liberation Sans" font-size="15" fill="#008acd">21</text><path d="M836.56,1091 V1097" stroke="#008acd" stroke-width="1.3"/><text x="857.47" y="1113" text-anchor="middle" font-family="Liberation Sans" font-size="15" fill="#008acd">23</text><path d="M878.38,1091 V1097" stroke="#008acd" stroke-width="1.3"/><text x="899.29" y="1113" text-anchor="middle" font-family="Liberation Sans" font-size="15" fill="#008acd">25</text><path d="M920.20,1091 V1097" stroke="#008acd" stroke-width="1.3"/><text x="941.11" y="1113" text-anchor="middle" font-family="Liberation Sans" font-size="15" fill="#008acd">27</text><path d="M962.02,1091 V1097" stroke="#008acd" stroke-width="1.3"/><text x="982.93" y="1113" text-anchor="middle" font-family="Liberation Sans" font-size="15" fill="#008acd">29</text><path d="M1003.84,1091 V1097" stroke="#008acd" stroke-width="1.3"/><text x="1024.75" y="1113" text-anchor="middle" font-family="Liberation Sans" font-size="15" fill="#008acd">31</text><path d="M397.45,1091.00 C397.45,1091.00 407.91,1091.00 418.36,1091.00 C428.82,1091.00 428.82,1091.00 439.27,1091.00 C449.73,1091.00 449.73,1091.00 460.18,1091.00 C470.64,1091.00 470.64,1091.00 481.09,1091.00 C491.55,1091.00 491.55,1091.00 502.00,1091.00 C512.46,1091.00 512.50,1091.00 522.91,1091.00 C533.41,1090.33 535.23,1091.00 543.82,1088.33 C556.14,1081.12 554.61,1066.50 564.73,1066.50 C575.52,1067.19 572.96,1083.57 585.64,1091.00 C593.87,1091.00 596.10,1091.00 606.55,1091.00 C617.01,1091.00 617.01,1091.00 627.46,1091.00 C637.92,1091.00 637.92,1091.00 648.37,1091.00 C658.83,1091.00 658.83,1091.00 669.28,1091.00 C679.74,1091.00 679.74,1091.00 690.19,1091.00 C700.65,1091.00 700.65,1091.00 711.10,1091.00 C721.55,1091.00 721.55,1091.00 732.01,1091.00 C742.46,1091.00 742.46,1091.00 752.92,1091.00 C763.37,1091.00 763.37,1091.00 773.83,1091.00 C784.28,1091.00 784.28,1091.00 794.74,1091.00 C805.19,1091.00 805.19,1091.00 815.65,1091.00 C826.10,1091.00 826.10,1091.00 836.56,1091.00 C847.01,1091.00 847.01,1091.00 857.47,1091.00 C867.92,1091.00 867.92,1091.00 878.38,1091.00 C888.83,1091.00 888.83,1091.00 899.29,1091.00 C909.74,1091.00 909.74,1091.00 920.20,1091.00 C930.65,1091.00 930.65,1091.00 941.11,1091.00 C951.56,1091.00 951.56,1091.00 962.02,1091.00 C972.47,1091.00 972.47,1091.00 982.93,1091.00 C993.38,1091.00 993.38,1091.00 1003.84,1091.00 C1014.29,1091.00 1024.75,1091.00 1024.75,1091.00" fill="none" stroke="#2ec7c9" stroke-width="2.6" stroke-linejoin="round"/><circle cx="397.45" cy="1091.00" r="2" fill="#fff" stroke="#2ec7c9" stroke-width="1.3"/><circle cx="418.36" cy="1091.00" r="2" fill="#fff" stroke="#2ec7c9" stroke-width="1.3"/><circle cx="439.27" cy="1091.00" r="2" fill="#fff" stroke="#2ec7c9" stroke-width="1.3"/><circle cx="460.18" cy="1091.00" r="2" fill="#fff" stroke="#2ec7c9" stroke-width="1.3"/><circle cx="481.09" cy="1091.00" r="2" fill="#fff" stroke="#2ec7c9" stroke-width="1.3"/><circle cx="502.00" cy="1091.00" r="2" fill="#fff" stroke="#2ec7c9" stroke-width="1.3"/><circle cx="522.91" cy="1091.00" r="2" fill="#fff" stroke="#2ec7c9" stroke-width="1.3"/><circle cx="543.82" cy="1088.33" r="2" fill="#fff" stroke="#2ec7c9" stroke-width="1.3"/><circle cx="564.73" cy="1066.50" r="2" fill="#fff" stroke="#2ec7c9" stroke-width="1.3"/><circle cx="585.64" cy="1091.00" r="2" fill="#fff" stroke="#2ec7c9" stroke-width="1.3"/><circle cx="606.55" cy="1091.00" r="2" fill="#fff" stroke="#2ec7c9" stroke-width="1.3"/><circle cx="627.46" cy="1091.00" r="2" fill="#fff" stroke="#2ec7c9" stroke-width="1.3"/><circle cx="648.37" cy="1091.00" r="2" fill="#fff" stroke="#2ec7c9" stroke-width="1.3"/><circle cx="669.28" cy="1091.00" r="2" fill="#fff" stroke="#2ec7c9" stroke-width="1.3"/><circle cx="690.19" cy="1091.00" r="2" fill="#fff" stroke="#2ec7c9" stroke-width="1.3"/><circle cx="711.10" cy="1091.00" r="2" fill="#fff" stroke="#2ec7c9" stroke-width="1.3"/><circle cx="732.01" cy="1091.00" r="2" fill="#fff" stroke="#2ec7c9" stroke-width="1.3"/><circle cx="752.92" cy="1091.00" r="2" fill="#fff" stroke="#2ec7c9" stroke-width="1.3"/><circle cx="773.83" cy="1091.00" r="2" fill="#fff" stroke="#2ec7c9" stroke-width="1.3"/><circle cx="794.74" cy="1091.00" r="2" fill="#fff" stroke="#2ec7c9" stroke-width="1.3"/><circle cx="815.65" cy="1091.00" r="2" fill="#fff" stroke="#2ec7c9" stroke-width="1.3"/><circle cx="836.56" cy="1091.00" r="2" fill="#fff" stroke="#2ec7c9" stroke-width="1.3"/><circle cx="857.47" cy="1091.00" r="2" fill="#fff" stroke="#2ec7c9" stroke-width="1.3"/><circle cx="878.38" cy="1091.00" r="2" fill="#fff" stroke="#2ec7c9" stroke-width="1.3"/><circle cx="899.29" cy="1091.00" r="2" fill="#fff" stroke="#2ec7c9" stroke-width="1.3"/><circle cx="920.20" cy="1091.00" r="2" fill="#fff" stroke="#2ec7c9" stroke-width="1.3"/><circle cx="941.11" cy="1091.00" r="2" fill="#fff" stroke="#2ec7c9" stroke-width="1.3"/><circle cx="962.02" cy="1091.00" r="2" fill="#fff" stroke="#2ec7c9" stroke-width="1.3"/><circle cx="982.93" cy="1091.00" r="2" fill="#fff" stroke="#2ec7c9" stroke-width="1.3"/><circle cx="1003.84" cy="1091.00" r="2" fill="#fff" stroke="#2ec7c9" stroke-width="1.3"/><circle cx="1024.75" cy="1091.00" r="2" fill="#fff" stroke="#2ec7c9" stroke-width="1.3"/><path d="M397.45,1091.00 C397.45,1091.00 407.91,1091.00 418.36,1091.00 C428.82,1091.00 428.82,1091.00 439.27,1091.00 C449.73,1091.00 449.73,1091.00 460.18,1091.00 C470.64,1091.00 470.64,1091.00 481.09,1091.00 C491.55,1091.00 491.55,1091.00 502.00,1091.00 C512.46,1091.00 512.46,1091.00 522.91,1091.00 C533.37,1091.00 533.37,1091.00 543.82,1091.00 C554.28,1091.00 554.28,1091.00 564.73,1091.00 C575.19,1091.00 575.19,1091.00 585.64,1091.00 C596.10,1091.00 596.10,1091.00 606.55,1091.00 C617.01,1091.00 621.07,1091.00 627.46,1091.00 C641.98,1076.19 637.92,1048.33 648.37,1048.33 C658.83,1048.33 659.45,1091.00 669.28,1091.00 C680.36,1089.23 676.42,1063.94 690.19,1041.67 C697.33,1030.11 708.64,1036.62 711.10,1023.33 C729.55,923.54 723.01,815.50 732.01,815.50 C743.92,834.77 733.48,962.94 752.92,1091.00 C754.39,1091.00 763.37,1091.00 773.83,1091.00 C784.28,1091.00 784.54,1091.00 794.74,1091.00 C805.45,1089.29 805.19,1084.33 815.65,1084.33 C826.10,1084.33 825.88,1089.89 836.56,1091.00 C846.79,1091.00 847.01,1088.67 857.47,1088.67 C867.92,1088.67 867.89,1090.41 878.38,1091.00 C888.80,1091.00 888.83,1091.00 899.29,1091.00 C909.74,1091.00 909.74,1091.00 920.20,1091.00 C930.65,1091.00 930.65,1091.00 941.11,1091.00 C951.56,1091.00 962.02,1091.00 962.02,1091.00" fill="none" stroke="#b6a2de" stroke-width="2.6" stroke-linejoin="round"/><circle cx="397.45" cy="1091.00" r="2" fill="#fff" stroke="#b6a2de" stroke-width="1.3"/><circle cx="418.36" cy="1091.00" r="2" fill="#fff" stroke="#b6a2de" stroke-width="1.3"/><circle cx="439.27" cy="1091.00" r="2" fill="#fff" stroke="#b6a2de" stroke-width="1.3"/><circle cx="460.18" cy="1091.00" r="2" fill="#fff" stroke="#b6a2de" stroke-width="1.3"/><circle cx="481.09" cy="1091.00" r="2" fill="#fff" stroke="#b6a2de" stroke-width="1.3"/><circle cx="502.00" cy="1091.00" r="2" fill="#fff" stroke="#b6a2de" stroke-width="1.3"/><circle cx="522.91" cy="1091.00" r="2" fill="#fff" stroke="#b6a2de" stroke-width="1.3"/><circle cx="543.82" cy="1091.00" r="2" fill="#fff" stroke="#b6a2de" stroke-width="1.3"/><circle cx="564.73" cy="1091.00" r="2" fill="#fff" stroke="#b6a2de" stroke-width="1.3"/><circle cx="585.64" cy="1091.00" r="2" fill="#fff" stroke="#b6a2de" stroke-width="1.3"/><circle cx="606.55" cy="1091.00" r="2" fill="#fff" stroke="#b6a2de" stroke-width="1.3"/><circle cx="627.46" cy="1091.00" r="2" fill="#fff" stroke="#b6a2de" stroke-width="1.3"/><circle cx="648.37" cy="1048.33" r="2" fill="#fff" stroke="#b6a2de" stroke-width="1.3"/><circle cx="669.28" cy="1091.00" r="2" fill="#fff" stroke="#b6a2de" stroke-width="1.3"/><circle cx="690.19" cy="1041.67" r="2" fill="#fff" stroke="#b6a2de" stroke-width="1.3"/><circle cx="711.10" cy="1023.33" r="2" fill="#fff" stroke="#b6a2de" stroke-width="1.3"/><circle cx="732.01" cy="815.50" r="2" fill="#fff" stroke="#b6a2de" stroke-width="1.3"/><circle cx="752.92" cy="1091.00" r="2" fill="#fff" stroke="#b6a2de" stroke-width="1.3"/><circle cx="773.83" cy="1091.00" r="2" fill="#fff" stroke="#b6a2de" stroke-width="1.3"/><circle cx="794.74" cy="1091.00" r="2" fill="#fff" stroke="#b6a2de" stroke-width="1.3"/><circle cx="815.65" cy="1084.33" r="2" fill="#fff" stroke="#b6a2de" stroke-width="1.3"/><circle cx="836.56" cy="1091.00" r="2" fill="#fff" stroke="#b6a2de" stroke-width="1.3"/><circle cx="857.47" cy="1088.67" r="2" fill="#fff" stroke="#b6a2de" stroke-width="1.3"/><circle cx="878.38" cy="1091.00" r="2" fill="#fff" stroke="#b6a2de" stroke-width="1.3"/><circle cx="899.29" cy="1091.00" r="2" fill="#fff" stroke="#b6a2de" stroke-width="1.3"/><circle cx="920.20" cy="1091.00" r="2" fill="#fff" stroke="#b6a2de" stroke-width="1.3"/><circle cx="941.11" cy="1091.00" r="2" fill="#fff" stroke="#b6a2de" stroke-width="1.3"/><circle cx="962.02" cy="1091.00" r="2" fill="#fff" stroke="#b6a2de" stroke-width="1.3"/></svg><div style="position:absolute;left:1091px;top:627px;width:793px;height:532px;border-radius:6px;background:#fff"></div><div style="position:absolute;left:1111px;top:657.00px;height:20px;line-height:20px;font-size:20px;color:#222;font-weight:bold;white-space:nowrap;">月订单量（笔）</div><svg style="position:absolute;left:1251px;top:657px" width="18" height="18" viewBox="0 0 18 18" ><circle cx="9.0" cy="9.0" r="8.0" fill="none" stroke="#333" stroke-width="1.4"/><text x="9.0" y="13.6" text-anchor="middle" font-family="Liberation Sans" font-size="12.5" fill="#333">?</text></svg><svg style="position:absolute;left:1369px;top:696px" width="31" height="17" viewBox="0 0 31 17" ><path d="M0.5,8.7 H31" stroke="#2ec7c9" stroke-width="1.6"/><circle cx="15.9" cy="8.8" r="6.6" fill="#fff" stroke="#2ec7c9" stroke-width="1.5"/></svg><div style="position:absolute;left:1406px;top:697.00px;height:15px;line-height:15px;font-size:15px;color:#333;font-weight:normal;white-space:nowrap;">本月订单量</div><svg style="position:absolute;left:1495px;top:696px" width="31" height="17" viewBox="0 0 31 17" ><path d="M0.5,8.7 H31" stroke="#b6a2de" stroke-width="1.6"/><circle cx="15.9" cy="8.8" r="6.6" fill="#fff" stroke="#b6a2de" stroke-width="1.5"/></svg><div style="position:absolute;left:1532px;top:697.00px;height:15px;line-height:15px;font-size:15px;color:#333;font-weight:normal;white-space:nowrap;">上月订单量</div><svg style="position:absolute;left:0;top:0" width="1920" height="1180"><rect x="1166.5" y="791" width="673.5" height="50" fill="#f8f8f8"/><rect x="1166.5" y="841" width="673.5" height="50" fill="#fdfdfd"/><rect x="1166.5" y="891" width="673.5" height="50" fill="#f8f8f8"/><rect x="1166.5" y="941" width="673.5" height="50" fill="#fdfdfd"/><rect x="1166.5" y="991" width="673.5" height="50" fill="#f8f8f8"/><rect x="1166.5" y="1041" width="673.5" height="50" fill="#fdfdfd"/><path d="M1166.5,791.5 H1840" stroke="#eeeeee" stroke-width="1"/><path d="M1166.5,841.5 H1840" stroke="#eeeeee" stroke-width="1"/><path d="M1166.5,891.5 H1840" stroke="#eeeeee" stroke-width="1"/><path d="M1166.5,941.5 H1840" stroke="#eeeeee" stroke-width="1"/><path d="M1166.5,991.5 H1840" stroke="#eeeeee" stroke-width="1"/><path d="M1166.5,1041.5 H1840" stroke="#eeeeee" stroke-width="1"/><path d="M1167.0,791 V1091" stroke="#008acd" stroke-width="1.5"/><path d="M1159.5,1091 H1840" stroke="#008acd" stroke-width="1.5"/><path d="M1160.5,791.5 H1166.5" stroke="#008acd" stroke-width="1.3"/><text x="1155.5" y="795.2" text-anchor="end" font-family="Liberation Sans" font-size="15" fill="#008acd">3</text><path d="M1160.5,841.5 H1166.5" stroke="#008acd" stroke-width="1.3"/><text x="1155.5" y="845.2" text-anchor="end" font-family="Liberation Sans" font-size="15" fill="#008acd">2.5</text><path d="M1160.5,891.5 H1166.5" stroke="#008acd" stroke-width="1.3"/><text x="1155.5" y="895.2" text-anchor="end" font-family="Liberation Sans" font-size="15" fill="#008acd">2</text><path d="M1160.5,941.5 H1166.5" stroke="#008acd" stroke-width="1.3"/><text x="1155.5" y="945.2" text-anchor="end" font-family="Liberation Sans" font-size="15" fill="#008acd">1.5</text><path d="M1160.5,991.5 H1166.5" stroke="#008acd" stroke-width="1.3"/><text x="1155.5" y="995.2" text-anchor="end" font-family="Liberation Sans" font-size="15" fill="#008acd">1</text><path d="M1160.5,1041.5 H1166.5" stroke="#008acd" stroke-width="1.3"/><text x="1155.5" y="1045.2" text-anchor="end" font-family="Liberation Sans" font-size="15" fill="#008acd">0.5</text><path d="M1160.5,1091.5 H1166.5" stroke="#008acd" stroke-width="1.3"/><text x="1155.5" y="1095.2" text-anchor="end" font-family="Liberation Sans" font-size="15" fill="#008acd">0</text><text x="1177.36" y="1113" text-anchor="middle" font-family="Liberation Sans" font-size="15" fill="#008acd">1</text><path d="M1199.09,1091 V1097" stroke="#008acd" stroke-width="1.3"/><text x="1220.81" y="1113" text-anchor="middle" font-family="Liberation Sans" font-size="15" fill="#008acd">3</text><path d="M1242.54,1091 V1097" stroke="#008acd" stroke-width="1.3"/><text x="1264.27" y="1113" text-anchor="middle" font-family="Liberation Sans" font-size="15" fill="#008acd">5</text><path d="M1285.99,1091 V1097" stroke="#008acd" stroke-width="1.3"/><text x="1307.72" y="1113" text-anchor="middle" font-family="Liberation Sans" font-size="15" fill="#008acd">7</text><path d="M1329.44,1091 V1097" stroke="#008acd" stroke-width="1.3"/><text x="1351.17" y="1113" text-anchor="middle" font-family="Liberation Sans" font-size="15" fill="#008acd">9</text><path d="M1372.90,1091 V1097" stroke="#008acd" stroke-width="1.3"/><text x="1394.62" y="1113" text-anchor="middle" font-family="Liberation Sans" font-size="15" fill="#008acd">11</text><path d="M1416.35,1091 V1097" stroke="#008acd" stroke-width="1.3"/><text x="1438.07" y="1113" text-anchor="middle" font-family="Liberation Sans" font-size="15" fill="#008acd">13</text><path d="M1459.80,1091 V1097" stroke="#008acd" stroke-width="1.3"/><text x="1481.52" y="1113" text-anchor="middle" font-family="Liberation Sans" font-size="15" fill="#008acd">15</text><path d="M1503.25,1091 V1097" stroke="#008acd" stroke-width="1.3"/><text x="1524.98" y="1113" text-anchor="middle" font-family="Liberation Sans" font-size="15" fill="#008acd">17</text><path d="M1546.70,1091 V1097" stroke="#008acd" stroke-width="1.3"/><text x="1568.43" y="1113" text-anchor="middle" font-family="Liberation Sans" font-size="15" fill="#008acd">19</text><path d="M1590.15,1091 V1097" stroke="#008acd" stroke-width="1.3"/><text x="1611.88" y="1113" text-anchor="middle" font-family="Liberation Sans" font-size="15" fill="#008acd">21</text><path d="M1633.60,1091 V1097" stroke="#008acd" stroke-width="1.3"/><text x="1655.33" y="1113" text-anchor="middle" font-family="Liberation Sans" font-size="15" fill="#008acd">23</text><path d="M1677.06,1091 V1097" stroke="#008acd" stroke-width="1.3"/><text x="1698.78" y="1113" text-anchor="middle" font-family="Liberation Sans" font-size="15" fill="#008acd">25</text><path d="M1720.51,1091 V1097" stroke="#008acd" stroke-width="1.3"/><text x="1742.23" y="1113" text-anchor="middle" font-family="Liberation Sans" font-size="15" fill="#008acd">27</text><path d="M1763.96,1091 V1097" stroke="#008acd" stroke-width="1.3"/><text x="1785.69" y="1113" text-anchor="middle" font-family="Liberation Sans" font-size="15" fill="#008acd">29</text><path d="M1807.41,1091 V1097" stroke="#008acd" stroke-width="1.3"/><text x="1829.14" y="1113" text-anchor="middle" font-family="Liberation Sans" font-size="15" fill="#008acd">31</text><path d="M1177.36,1091.00 C1177.36,1091.00 1188.23,1091.00 1199.09,1091.00 C1209.95,1091.00 1209.95,1091.00 1220.81,1091.00 C1231.68,1091.00 1231.68,1091.00 1242.54,1091.00 C1253.40,1091.00 1253.40,1091.00 1264.27,1091.00 C1275.13,1091.00 1275.13,1091.00 1285.99,1091.00 C1296.85,1091.00 1303.91,1091.00 1307.72,1091.00 C1325.64,1049.76 1311.52,1032.24 1329.44,991.00 C1333.25,991.00 1347.36,991.00 1351.17,991.00 C1369.09,1032.24 1354.97,1049.76 1372.90,1091.00 C1376.70,1091.00 1383.76,1091.00 1394.62,1091.00 C1405.48,1091.00 1405.48,1091.00 1416.35,1091.00 C1427.21,1091.00 1427.21,1091.00 1438.07,1091.00 C1448.94,1091.00 1448.94,1091.00 1459.80,1091.00 C1470.66,1091.00 1470.66,1091.00 1481.52,1091.00 C1492.39,1091.00 1492.39,1091.00 1503.25,1091.00 C1514.11,1091.00 1514.11,1091.00 1524.98,1091.00 C1535.84,1091.00 1535.84,1091.00 1546.70,1091.00 C1557.56,1091.00 1557.56,1091.00 1568.43,1091.00 C1579.29,1091.00 1579.29,1091.00 1590.15,1091.00 C1601.02,1091.00 1601.02,1091.00 1611.88,1091.00 C1622.74,1091.00 1622.74,1091.00 1633.60,1091.00 C1644.47,1091.00 1644.47,1091.00 1655.33,1091.00 C1666.19,1091.00 1666.19,1091.00 1677.06,1091.00 C1687.92,1091.00 1687.92,1091.00 1698.78,1091.00 C1709.65,1091.00 1709.65,1091.00 1720.51,1091.00 C1731.37,1091.00 1731.37,1091.00 1742.23,1091.00 C1753.10,1091.00 1753.10,1091.00 1763.96,1091.00 C1774.82,1091.00 1774.82,1091.00 1785.69,1091.00 C1796.55,1091.00 1796.55,1091.00 1807.41,1091.00 C1818.27,1091.00 1829.14,1091.00 1829.14,1091.00" fill="none" stroke="#2ec7c9" stroke-width="2.6" stroke-linejoin="round"/><circle cx="1177.36" cy="1091.00" r="2" fill="#fff" stroke="#2ec7c9" stroke-width="1.3"/><circle cx="1199.09" cy="1091.00" r="2" fill="#fff" stroke="#2ec7c9" stroke-width="1.3"/><circle cx="1220.81" cy="1091.00" r="2" fill="#fff" stroke="#2ec7c9" stroke-width="1.3"/><circle cx="1242.54" cy="1091.00" r="2" fill="#fff" stroke="#2ec7c9" stroke-width="1.3"/><circle cx="1264.27" cy="1091.00" r="2" fill="#fff" stroke="#2ec7c9" stroke-width="1.3"/><circle cx="1285.99" cy="1091.00" r="2" fill="#fff" stroke="#2ec7c9" stroke-width="1.3"/><circle cx="1307.72" cy="1091.00" r="2" fill="#fff" stroke="#2ec7c9" stroke-width="1.3"/><circle cx="1329.44" cy="991.00" r="2" fill="#fff" stroke="#2ec7c9" stroke-width="1.3"/><circle cx="1351.17" cy="991.00" r="2" fill="#fff" stroke="#2ec7c9" stroke-width="1.3"/><circle cx="1372.90" cy="1091.00" r="2" fill="#fff" stroke="#2ec7c9" stroke-width="1.3"/><circle cx="1394.62" cy="1091.00" r="2" fill="#fff" stroke="#2ec7c9" stroke-width="1.3"/><circle cx="1416.35" cy="1091.00" r="2" fill="#fff" stroke="#2ec7c9" stroke-width="1.3"/><circle cx="1438.07" cy="1091.00" r="2" fill="#fff" stroke="#2ec7c9" stroke-width="1.3"/><circle cx="1459.80" cy="1091.00" r="2" fill="#fff" stroke="#2ec7c9" stroke-width="1.3"/><circle cx="1481.52" cy="1091.00" r="2" fill="#fff" stroke="#2ec7c9" stroke-width="1.3"/><circle cx="1503.25" cy="1091.00" r="2" fill="#fff" stroke="#2ec7c9" stroke-width="1.3"/><circle cx="1524.98" cy="1091.00" r="2" fill="#fff" stroke="#2ec7c9" stroke-width="1.3"/><circle cx="1546.70" cy="1091.00" r="2" fill="#fff" stroke="#2ec7c9" stroke-width="1.3"/><circle cx="1568.43" cy="1091.00" r="2" fill="#fff" stroke="#2ec7c9" stroke-width="1.3"/><circle cx="1590.15" cy="1091.00" r="2" fill="#fff" stroke="#2ec7c9" stroke-width="1.3"/><circle cx="1611.88" cy="1091.00" r="2" fill="#fff" stroke="#2ec7c9" stroke-width="1.3"/><circle cx="1633.60" cy="1091.00" r="2" fill="#fff" stroke="#2ec7c9" stroke-width="1.3"/><circle cx="1655.33" cy="1091.00" r="2" fill="#fff" stroke="#2ec7c9" stroke-width="1.3"/><circle cx="1677.06" cy="1091.00" r="2" fill="#fff" stroke="#2ec7c9" stroke-width="1.3"/><circle cx="1698.78" cy="1091.00" r="2" fill="#fff" stroke="#2ec7c9" stroke-width="1.3"/><circle cx="1720.51" cy="1091.00" r="2" fill="#fff" stroke="#2ec7c9" stroke-width="1.3"/><circle cx="1742.23" cy="1091.00" r="2" fill="#fff" stroke="#2ec7c9" stroke-width="1.3"/><circle cx="1763.96" cy="1091.00" r="2" fill="#fff" stroke="#2ec7c9" stroke-width="1.3"/><circle cx="1785.69" cy="1091.00" r="2" fill="#fff" stroke="#2ec7c9" stroke-width="1.3"/><circle cx="1807.41" cy="1091.00" r="2" fill="#fff" stroke="#2ec7c9" stroke-width="1.3"/><circle cx="1829.14" cy="1091.00" r="2" fill="#fff" stroke="#2ec7c9" stroke-width="1.3"/><path d="M1177.36,1091.00 C1177.36,1091.00 1188.23,1091.00 1199.09,1091.00 C1209.95,1091.00 1209.95,1091.00 1220.81,1091.00 C1231.68,1091.00 1231.68,1091.00 1242.54,1091.00 C1253.40,1091.00 1253.40,1091.00 1264.27,1091.00 C1275.13,1091.00 1275.13,1091.00 1285.99,1091.00 C1296.85,1091.00 1296.85,1091.00 1307.72,1091.00 C1318.58,1091.00 1318.58,1091.00 1329.44,1091.00 C1340.31,1091.00 1340.31,1091.00 1351.17,1091.00 C1362.03,1091.00 1362.03,1091.00 1372.90,1091.00 C1383.76,1091.00 1383.76,1091.00 1394.62,1091.00 C1405.48,1091.00 1414.23,1091.00 1416.35,1091.00 C1435.96,1000.75 1427.21,891.00 1438.07,891.00 C1448.94,891.00 1445.40,1057.86 1459.80,1091.00 C1467.12,1091.00 1463.60,1032.24 1481.52,991.00 C1485.33,982.24 1501.13,1000.75 1503.25,991.00 C1522.86,900.75 1516.27,791.00 1524.98,791.00 C1537.99,820.96 1526.44,951.10 1546.70,1091.00 C1548.17,1091.00 1557.56,1091.00 1568.43,1091.00 C1579.29,1091.00 1586.35,1091.00 1590.15,1091.00 C1608.07,1049.76 1601.02,991.00 1611.88,991.00 C1622.74,991.00 1622.74,1091.00 1633.60,1091.00 C1644.47,1091.00 1644.47,991.00 1655.33,991.00 C1666.19,991.00 1659.14,1049.76 1677.06,1091.00 C1680.86,1091.00 1687.92,1091.00 1698.78,1091.00 C1709.65,1091.00 1709.65,1091.00 1720.51,1091.00 C1731.37,1091.00 1731.37,1091.00 1742.23,1091.00 C1753.10,1091.00 1763.96,1091.00 1763.96,1091.00" fill="none" stroke="#b6a2de" stroke-width="2.6" stroke-linejoin="round"/><circle cx="1177.36" cy="1091.00" r="2" fill="#fff" stroke="#b6a2de" stroke-width="1.3"/><circle cx="1199.09" cy="1091.00" r="2" fill="#fff" stroke="#b6a2de" stroke-width="1.3"/><circle cx="1220.81" cy="1091.00" r="2" fill="#fff" stroke="#b6a2de" stroke-width="1.3"/><circle cx="1242.54" cy="1091.00" r="2" fill="#fff" stroke="#b6a2de" stroke-width="1.3"/><circle cx="1264.27" cy="1091.00" r="2" fill="#fff" stroke="#b6a2de" stroke-width="1.3"/><circle cx="1285.99" cy="1091.00" r="2" fill="#fff" stroke="#b6a2de" stroke-width="1.3"/><circle cx="1307.72" cy="1091.00" r="2" fill="#fff" stroke="#b6a2de" stroke-width="1.3"/><circle cx="1329.44" cy="1091.00" r="2" fill="#fff" stroke="#b6a2de" stroke-width="1.3"/><circle cx="1351.17" cy="1091.00" r="2" fill="#fff" stroke="#b6a2de" stroke-width="1.3"/><circle cx="1372.90" cy="1091.00" r="2" fill="#fff" stroke="#b6a2de" stroke-width="1.3"/><circle cx="1394.62" cy="1091.00" r="2" fill="#fff" stroke="#b6a2de" stroke-width="1.3"/><circle cx="1416.35" cy="1091.00" r="2" fill="#fff" stroke="#b6a2de" stroke-width="1.3"/><circle cx="1438.07" cy="891.00" r="2" fill="#fff" stroke="#b6a2de" stroke-width="1.3"/><circle cx="1459.80" cy="1091.00" r="2" fill="#fff" stroke="#b6a2de" stroke-width="1.3"/><circle cx="1481.52" cy="991.00" r="2" fill="#fff" stroke="#b6a2de" stroke-width="1.3"/><circle cx="1503.25" cy="991.00" r="2" fill="#fff" stroke="#b6a2de" stroke-width="1.3"/><circle cx="1524.98" cy="791.00" r="2" fill="#fff" stroke="#b6a2de" stroke-width="1.3"/><circle cx="1546.70" cy="1091.00" r="2" fill="#fff" stroke="#b6a2de" stroke-width="1.3"/><circle cx="1568.43" cy="1091.00" r="2" fill="#fff" stroke="#b6a2de" stroke-width="1.3"/><circle cx="1590.15" cy="1091.00" r="2" fill="#fff" stroke="#b6a2de" stroke-width="1.3"/><circle cx="1611.88" cy="991.00" r="2" fill="#fff" stroke="#b6a2de" stroke-width="1.3"/><circle cx="1633.60" cy="1091.00" r="2" fill="#fff" stroke="#b6a2de" stroke-width="1.3"/><circle cx="1655.33" cy="991.00" r="2" fill="#fff" stroke="#b6a2de" stroke-width="1.3"/><circle cx="1677.06" cy="1091.00" r="2" fill="#fff" stroke="#b6a2de" stroke-width="1.3"/><circle cx="1698.78" cy="1091.00" r="2" fill="#fff" stroke="#b6a2de" stroke-width="1.3"/><circle cx="1720.51" cy="1091.00" r="2" fill="#fff" stroke="#b6a2de" stroke-width="1.3"/><circle cx="1742.23" cy="1091.00" r="2" fill="#fff" stroke="#b6a2de" stroke-width="1.3"/><circle cx="1763.96" cy="1091.00" r="2" fill="#fff" stroke="#b6a2de" stroke-width="1.3"/></svg>
</body></html>
